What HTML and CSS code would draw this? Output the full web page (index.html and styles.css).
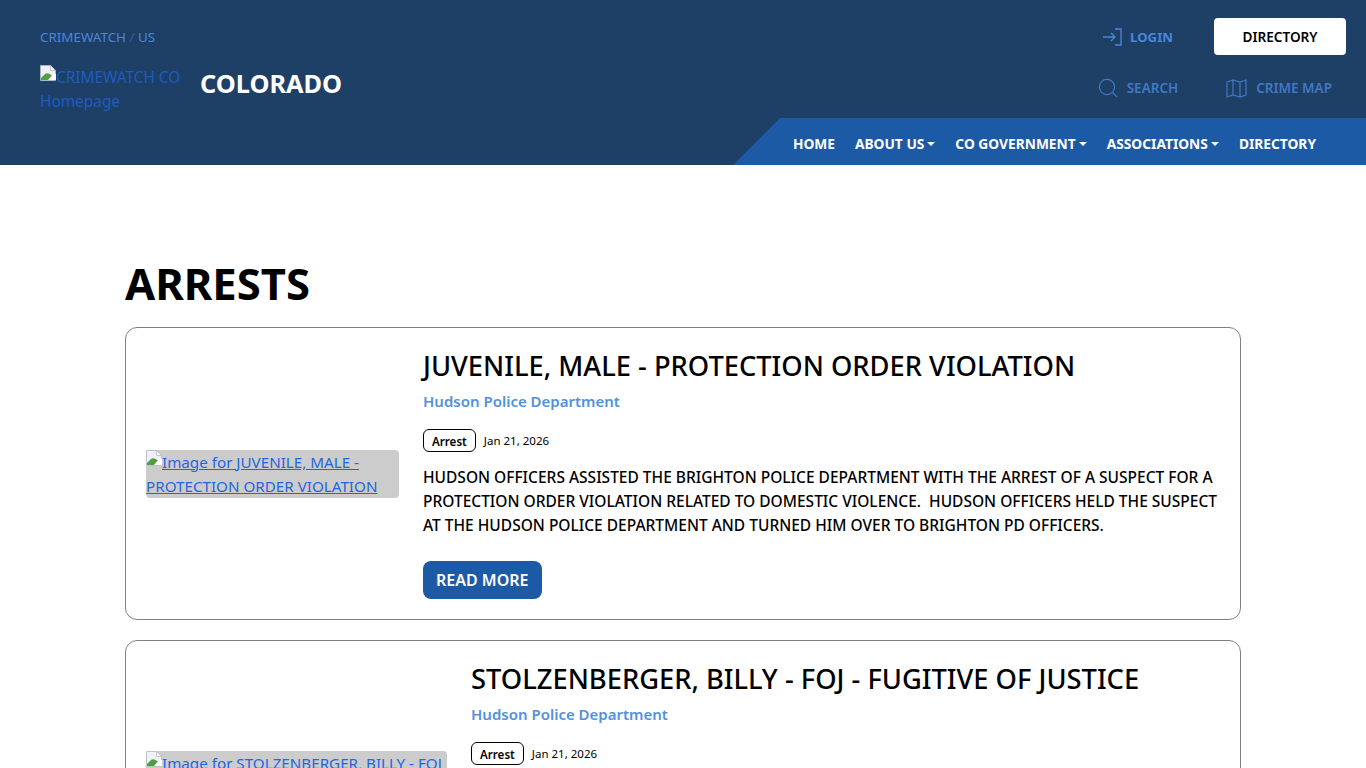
FILE: index.html
```html
<!DOCTYPE html>
<html lang="en">
<head>
  <meta charset="UTF-8" />
  <title>Arrests - CrimeWatch Colorado</title>
  <link rel="stylesheet" href="styles.css">
</head>
<body>
  <svg class="icon-defs" width="0" height="0">
    <symbol id="broken" viewBox="0 0 16 16">
      <path d="M.5.5h10l5 5v10H.5z" fill="#eef2f8" stroke="#b4bac4" stroke-width=".8"/>
      <path d="M10.5.5v5h5z" fill="#fff" stroke="#b4bac4" stroke-width=".8"/>
      <path d="M1 15v-2l4-4c2-1.500 4-.5 6 1l3 2-2 3z" fill="#4f9e3f"/>
      <path d="M8 15l6-7 2 1v6z" fill="#fff"/>
    </symbol>
  </svg>

  <header class="site-header">
    <div class="brand">
      <div class="crumbs"><a href="#">CRIMEWATCH</a> <span class="crumb-sep">/</span> <a href="#">US</a></div>
      <div class="brand-row">
        <a href="#" class="logo-link"><svg class="broken-img" width="16" height="16"><use href="#broken"/></svg>CRIMEWATCH CO Homepage</a>
        <div class="state-name">COLORADO</div>
      </div>
    </div>
    <div class="header-right">
      <div class="top-row">
        <a href="#" class="login-link">
          <svg width="20" height="18" viewBox="0 0 20 18" fill="none" stroke="currentColor" stroke-width="1.3"><path d="M1 9h12M9 5l4 4-4 4M13 1h6v16h-6"/></svg>
          LOGIN
        </a>
        <a href="#" class="directory-btn">DIRECTORY</a>
      </div>
      <div class="tool-row">
        <a href="#" class="tool-link">
          <svg width="20" height="20" viewBox="0 0 20 20" fill="none" stroke="currentColor" stroke-width="1.2"><circle cx="9" cy="9" r="7.6"/><path d="M14.500 14.500l4.500 4.500"/></svg>
          SEARCH
        </a>
        <a href="#" class="tool-link">
          <svg width="21" height="19" viewBox="0 0 21 19" fill="none" stroke="currentColor" stroke-width="1.2"><path d="M1 3l6-2 7 2 6-2v15l-6 2-7-2-6 2zM7 1v15M14 3v15"/></svg>
          CRIME MAP
        </a>
      </div>
      <nav class="main-nav">
        <a href="#">HOME</a>
        <a href="#" class="has-menu">ABOUT US</a>
        <a href="#" class="has-menu">CO GOVERNMENT</a>
        <a href="#" class="has-menu">ASSOCIATIONS</a>
        <a href="#">DIRECTORY</a>
      </nav>
    </div>
  </header>

  <main class="content">
    <h1>ARRESTS</h1>

    <article class="card">
      <a href="#" class="card-img img-narrow"><svg class="broken-img" width="16" height="16"><use href="#broken"/></svg>Image for JUVENILE, MALE - PROTECTION ORDER VIOLATION</a>
      <div class="card-body">
        <h2>JUVENILE, MALE - PROTECTION ORDER VIOLATION</h2>
        <a href="#" class="agency">Hudson Police Department</a>
        <div class="meta"><span class="tag">Arrest</span><span class="date">Jan 21, 2026</span></div>
        <p>HUDSON OFFICERS ASSISTED THE BRIGHTON POLICE DEPARTMENT WITH THE ARREST OF A SUSPECT FOR A PROTECTION ORDER VIOLATION RELATED TO DOMESTIC VIOLENCE.&nbsp; HUDSON OFFICERS HELD THE SUSPECT AT THE HUDSON POLICE DEPARTMENT AND TURNED HIM OVER TO BRIGHTON PD OFFICERS.</p>
        <a href="#" class="read-more">READ MORE</a>
      </div>
    </article>

    <article class="card card-cut">
      <a href="#" class="card-img img-wide"><svg class="broken-img" width="16" height="16"><use href="#broken"/></svg>Image for STOLZENBERGER, BILLY - FOJ - FUGITIVE OF JUSTICE</a>
      <div class="card-body">
        <h2>STOLZENBERGER, BILLY - FOJ - FUGITIVE OF JUSTICE</h2>
        <a href="#" class="agency">Hudson Police Department</a>
        <div class="meta"><span class="tag">Arrest</span><span class="date">Jan 21, 2026</span></div>
      </div>
    </article>
  </main>
</body>
</html>
```
FILE: styles.css
```css
html, body {
  height: 100vh;
  overflow: hidden;
}
body {
  margin: 0;
  background: #fff;
  color: #000;
  font-family: "Noto Sans", "Open Sans", sans-serif;
  font-size: 16px;
  line-height: 24px;
}
a {
  text-decoration: none;
}
.icon-defs {
  display: block;
}
.broken-img {
  vertical-align: top;
}

/* header */
.site-header {
  background: #1e3f66;
  height: 165px;
  display: flex;
  justify-content: space-between;
  padding: 0 20px 0 40px;
  box-sizing: border-box;
}
.brand {
  padding-top: 26px;
}
.crumbs {
  font-size: 13.4px;
  line-height: 22px;
  color: #3a5f92;
}
.crumbs a {
  color: #4a87d8;
}
.brand-row {
  display: flex;
  align-items: flex-start;
  margin-top: 17px;
}
.logo-link {
  width: 160px;
  padding-top: 1px;
  color: #1f5cc0;
  font-size: 15.4px;
}
.logo-link .broken-img {
  margin-top: -1px;
}
.state-name {
  margin-top: -1px;
  color: #fff;
  font-size: 25.3px;
  font-weight: 700;
  line-height: 38px;
}
.header-right {
  display: flex;
  flex-direction: column;
  align-items: flex-end;
  padding-top: 18px;
}
.top-row {
  display: flex;
  align-items: center;
  gap: 41px;
  height: 37px;
}
.login-link {
  display: flex;
  align-items: center;
  gap: 8px;
  color: #4a87d8;
  font-size: 13.2px;
  font-weight: 700;
}
.directory-btn {
  width: 132px;
  height: 37px;
  line-height: 37px;
  text-align: center;
  background: #fff;
  color: #000;
  border-radius: 4px;
  font-size: 13.6px;
  font-weight: 600;
}
.tool-row {
  display: flex;
  gap: 48px;
  margin-top: 23px;
  padding-right: 14px;
  height: 41px;
}
.tool-link {
  display: flex;
  align-items: center;
  gap: 9px;
  height: 20px;
  color: #4079c4;
  font-size: 13.5px;
  font-weight: 600;
}
.main-nav {
  display: flex;
  align-items: center;
  justify-content: flex-end;
  gap: 20px;
  width: 633px;
  height: 48px;
  margin-right: -20px;
  box-sizing: border-box;
  padding: 4px 50px 0 0;
  background: #1d5aa6;
  clip-path: polygon(47px 0, 100% 0, 100% 100%, 0 100%);
}
.main-nav a {
  color: #fff;
  font-size: 13.75px;
  font-weight: 700;
}
.has-menu::after {
  content: "";
  display: inline-block;
  margin-left: 3px;
  vertical-align: 3px;
  border-top: 4px solid #fff;
  border-left: 4px solid transparent;
  border-right: 4px solid transparent;
}

/* listing */
.content {
  width: 1116px;
  margin: 0 auto;
  padding-top: 87px;
}
h1 {
  margin: 0 0 12px;
  font-size: 43.6px;
  line-height: 63px;
  font-weight: 700;
}
.card {
  display: flex;
  align-items: center;
  gap: 24px;
  border: 1px solid #808080;
  border-radius: 12px;
  padding: 20px;
  margin-bottom: 20px;
}
.card-cut {
  height: 270px;
  box-sizing: border-box;
}
.card-cut .card-body {
  align-self: flex-start;
}
.card-img {
  flex: none;
  background: #ccc;
  border-radius: 4px;
  color: #1f66e0;
  font-size: 15.2px;
  text-decoration: underline;
}
.img-narrow {
  width: 253px;
}
.img-wide {
  width: 301px;
}
.card-body {
  flex: 1;
  min-width: 0;
}
h2 {
  margin: 0;
  font-size: 27.3px;
  line-height: 36px;
  font-weight: 500;
}
.agency {
  display: block;
  margin-top: 5px;
  color: #5391dc;
  font-size: 15px;
  font-weight: 600;
}
.meta {
  display: flex;
  align-items: center;
  gap: 8px;
  margin-top: 16px;
}
.tag {
  border: 1px solid #000;
  border-radius: 6px;
  padding: 2px 8px 0;
  font-size: 11.6px;
  font-weight: 600;
  line-height: 19px;
}
.date {
  font-size: 11.5px;
  line-height: 20px;
}
.card-body p {
  margin: 13px 0 24px;
  font-size: 15.5px;
  font-weight: 500;
  line-height: 24px;
}
.read-more {
  display: inline-block;
  background: #1d5aa6;
  color: #fff;
  border-radius: 8px;
  padding: 7px 13px;
  font-size: 16px;
  font-weight: 600;
}
```
